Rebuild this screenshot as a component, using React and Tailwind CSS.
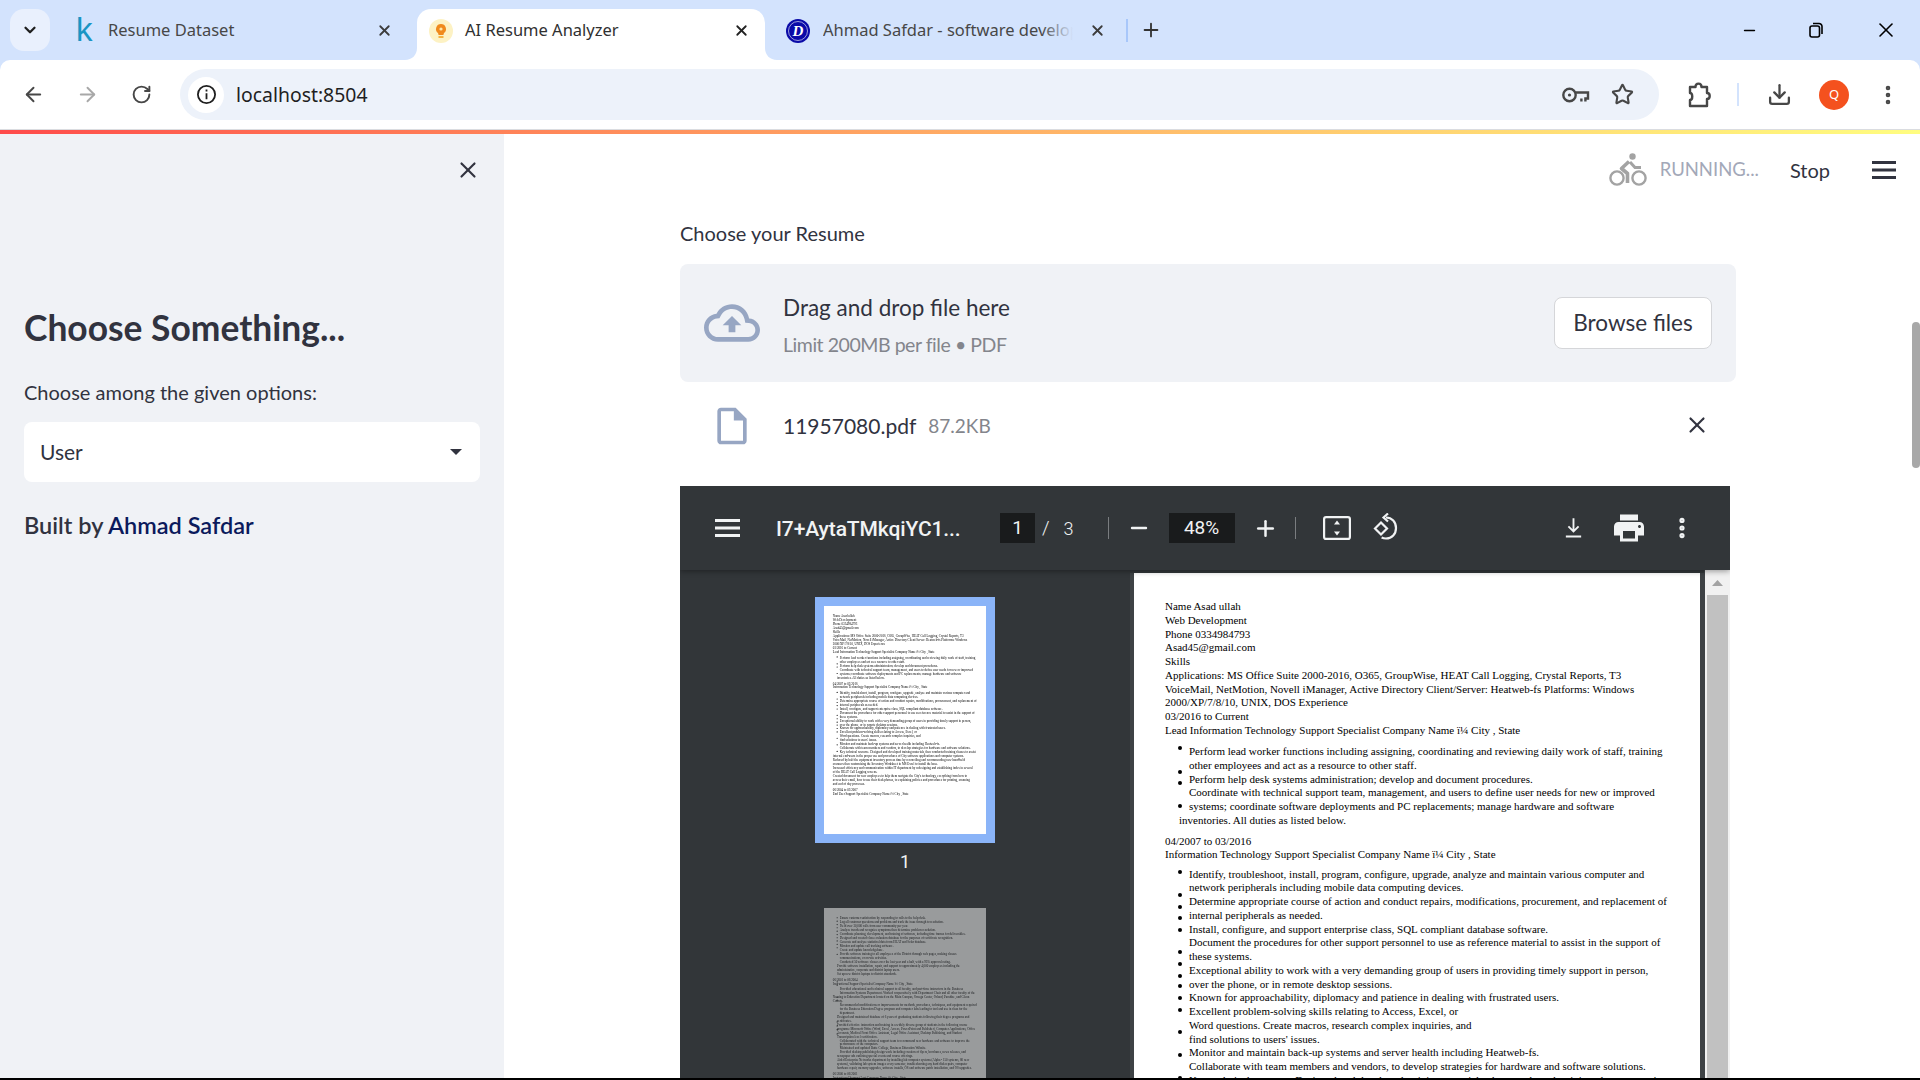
import React from "react";
import { ArrowLeft, ArrowRight, RotateCw, Star, Download, EllipsisVertical, X, Plus, Minus, ChevronDown } from "lucide-react";

const page1Blocks = [
  {
    gap: 0,
    lines: [
      "Name Asad ullah",
      "Web Development",
      "Phone 0334984793",
      "Asad45@gmail.com",
      "Skills",
      "Applications: MS Office Suite 2000-2016, O365, GroupWise, HEAT Call Logging, Crystal Reports, T3",
      "VoiceMail, NetMotion, Novell iManager, Active Directory Client/Server: Heatweb-fs Platforms: Windows",
      "2000/XP/7/8/10, UNIX, DOS Experience",
      "03/2016 to Current",
      "Lead Information Technology Support Specialist Company Name ï¼ City , State",
    ],
  },
  {
    gap: 7.5,
    indent: true,
    lines: [
      "Perform lead worker functions including assigning, coordinating and reviewing daily work of staff, training",
      "other employees and act as a resource to other staff.",
      "Perform help desk systems administration; develop and document procedures.",
      "Coordinate with technical support team, management, and users to define user needs for new or improved",
      "systems; coordinate software deployments and PC replacements; manage hardware and software",
    ],
  },
  { gap: 0, small: true, lines: ["inventories. All duties as listed below."] },
  { gap: 7, lines: ["04/2007 to 03/2016", "Information Technology Support Specialist Company Name ï¼ City , State"] },
  {
    gap: 5.5,
    indent: true,
    lines: [
      "Identify, troubleshoot, install, program, configure, upgrade, analyze and maintain various computer and",
      "network peripherals including mobile data computing devices.",
      "Determine appropriate course of action and conduct repairs, modifications, procurement, and replacement of",
      "internal peripherals as needed.",
      "Install, configure, and support enterprise class, SQL compliant database software.",
      "Document the procedures for other support personnel to use as reference material to assist in the support of",
      "these systems.",
      "Exceptional ability to work with a very demanding group of users in providing timely support in person,",
      "over the phone, or in remote desktop sessions.",
      "Known for approachability, diplomacy and patience in dealing with frustrated users.",
      "Excellent problem-solving skills relating to Access, Excel, or",
      "Word questions. Create macros, research complex inquiries, and",
      "find solutions to users' issues.",
      "Monitor and maintain back-up systems and server health including Heatweb-fs.",
      "Collaborate with team members and vendors, to develop strategies for hardware and software solutions.",
      "Key technical resource. Designed and developed training materials, then conducted training classes to assist",
    ],
  },
  {
    gap: 0,
    lines: [
      "internal end-users in the proper use and procedures of City software applications and computer systems.",
      "Reduced by half the equipment inventory process time by reconciling and recommending new hand-held",
      "scanners then customizing the Inventory Worksheet in MS Excel to install the base.",
      "Increased efficiency and communication within IT department by redesigning and establishing index in several",
      "of the HEAT Call Logging screens.",
      "Created document for new employees to help them navigate the City's technology, everything from how to",
      "access their email, how to use their desk phones, to explaining policies and procedures for printing, scanning",
      "and end of day processes.",
    ],
  },
  { gap: 8, lines: ["06/2004 to 03/2007", "End User Support Specialist Company Name ï¼ City , State"] },
];

const page1Bullets = [178, 202, 213, 236, 302, 325, 337, 348, 360, 382, 394, 406, 416, 428, 440, 462, 485, 508];

const page2Blocks = [
  {
    gap: 0,
    indent: true,
    lines: [
      "Ensure customer satisfaction by responding to calls to the help desk.",
      "Log all customer questions and problems and track the issue through to resolution.",
      "Field over 30,000 calls from user community per year.",
      "Analyze trends and recognize symptoms then determine problem resolution.",
      "Coordinate planning, development, and training of software, including time frames for deliverables.",
      "Designed and created class evaluation database for the purposes of certificate recognition.",
      "Generate and analyze statistical data from HEAT and Solar database.",
      "Monitor and update call tracking software.",
      "Create and update knowledgebase.",
      "Provide software training to all employees of the District through web pages, making classes",
      "communications, or on-site activities.",
      "Conducted 50 software classes over the last year and a half, with a 95% approval rating.",
    ],
  },
  {
    gap: 0,
    small: true,
    lines: [
      "Provide software installation, repair, and support to approximately 4,000 employees including the",
      "administrative, corporate and district laptop users.",
      "Set up new district laptops to district standards.",
    ],
  },
  { gap: 8, lines: ["06/2001 to 06/2004", "Instructional Support Specialist Company Name ï¼ City , State"] },
  {
    gap: 6,
    indent: true,
    lines: [
      "Provided educational and technical support to all faculty, and part-time instructors in the Business",
      "Information Systems Department. Worked cooperatively with Department Chair and all other faculty of the",
    ],
  },
  {
    gap: 0,
    lines: [
      "Nursing to Education Department located on the Main Campus, Omega Center, Orland, Paradise, and Glenn",
      "County.",
    ],
  },
  {
    gap: 0,
    indent: true,
    lines: [
      "Recommended modifications or improvements for methods, procedures, techniques, and equipment required",
      "for the Business Education Degree program and computer labs leading to tool and use in class for the",
      "department.",
    ],
  },
  {
    gap: 0,
    small: true,
    lines: [
      "Designed and maintained database of 6 years of graduating students following their degree programs and",
      "certificates.",
      "Provided effective instruction and training in a widely diverse group of students in the following course",
      "programs: Microsoft Office (Word, Excel, Access, PowerPoint and Publisher), Computer Applications, Office",
      "Accounts, Medical Front Office Assistant, Legal Office Assistant, Desktop Publishing, and Student",
      "Transcription level certification.",
    ],
  },
  {
    gap: 0,
    indent: true,
    lines: [
      "Collaborated with the technical support team to recommend new hardware and software to improve the",
      "performance of the computers.",
      "Maintained and updated Butte College, Business Education Website.",
      "Provided desktop publishing design work including creation of flyers, brochures, news releases, and",
    ],
  },
  {
    gap: 0,
    small: true,
    lines: [
      "newspaper ads outlining special events and course offerings.",
      "Aided Enterprise Networks department by installing lab computer systems (Alpha - 150 systems, 80 new",
      "systems), validating lab system images every semester, troubleshooting any hard disk repairs, computer",
      "hardware repair, memory upgrades, software installs, OS and software patch installation, and OS upgrades.",
    ],
  },
  { gap: 8, lines: ["06/2000 to 06/2001", "Instructional Support/Asst Company Name ï¼ City , State"] },
];

const page2Bullets = [34, 46, 58, 69, 81, 93, 104, 115, 127, 139, 162, 258, 270, 312, 322, 398, 412, 425, 440];

const PdfPage = ({ blocks, bullets }) => (
  <div className="relative w-[566px] h-[797px] bg-white text-black pt-[30px] font-['Liberation_Serif',serif] text-[11px] leading-[13.75px] whitespace-nowrap">
    {blocks.map((block, i) => (
      <div
        key={i}
        className={block.indent ? "pl-[55px]" : block.small ? "pl-[45px]" : "pl-[31px]"}
        style={{ marginTop: block.gap }}
      >
        {block.lines.map((line, j) => (
          <div key={j} className="h-[13.75px]">
            {line}
          </div>
        ))}
      </div>
    ))}
    {bullets.map((y) => (
      <span key={y} className="absolute left-[44px] w-[4px] h-[4px] rounded-full bg-black" style={{ top: y - 2 }} />
    ))}
  </div>
);

const Flare = ({ side }) =>
  side === "left" ? (
    <svg className="absolute left-[-12px] bottom-0 w-[12px] h-[12px]" viewBox="0 0 12 12">
      <path d="M12 0V12H0C7 12 12 7 12 0Z" fill="#fff" />
    </svg>
  ) : (
    <svg className="absolute right-[-12px] bottom-0 w-[12px] h-[12px]" viewBox="0 0 12 12">
      <path d="M0 0V12H12C5 12 0 7 0 0Z" fill="#fff" />
    </svg>
  );

const TabStrip = () => (
  <div className="h-[60px] shrink-0 bg-[#d3e3fd] flex font-['Noto_Sans',sans-serif] text-[16.5px] text-[#474747]">
    <div className="ml-[10px] mt-[9px] w-[40px] h-[42px] rounded-[14px] bg-[#e9f0fd] flex items-center justify-center">
      <ChevronDown size={18} strokeWidth={3} className="text-[#1f1f1f]" />
    </div>

    <div className="ml-[12px] w-[355px] h-[51px] mt-[9px] pb-[8px] flex items-center pl-[14px]">
      <span className="w-[32px] text-[#1a95c4] font-['Liberation_Sans',sans-serif] text-[33px] leading-none -mt-[2px]">k</span>
      <span>Resume Dataset</span>
      <X size={17} strokeWidth={2.5} className="ml-auto mr-[24px] text-[#3c3c3c]" />
    </div>

    <div className="relative w-[348px] h-[51px] mt-[9px] pb-[8px] bg-white rounded-t-[14px] flex items-center pl-[12px] text-[#303030]">
      <Flare side="left" />
      <svg className="w-[24px] h-[24px] mr-[12px]" viewBox="0 0 24 24">
        <circle cx="12" cy="12" r="12" fill="#fdf2c4" />
        <path d="M12 5a5 5 0 0 0-3 9l.6 2h4.8l.6-2a5 5 0 0 0-3-9z" fill="#f08a1c" />
        <rect x="9.5" y="17" width="5" height="2" fill="#f5b342" />
        <circle cx="12" cy="10" r="1.6" fill="#fde7a8" />
      </svg>
      <span>AI Resume Analyzer</span>
      <X size={17} strokeWidth={2.5} className="ml-auto mr-[15px] text-[#222]" />
      <Flare side="right" />
    </div>

    <div className="w-[353px] h-[51px] mt-[9px] pb-[8px] flex items-center pl-[21px]">
      <svg className="w-[24px] h-[24px] mr-[13px] shrink-0" viewBox="0 0 24 24">
        <circle cx="12" cy="12" r="12" fill="#0a0aa8" />
        <circle cx="12" cy="12" r="9.5" fill="none" stroke="#fff" strokeWidth="0.6" />
        <text x="12" y="17" textAnchor="middle" fill="#fff" fontSize="15" fontWeight="700" fontStyle="italic" fontFamily="Liberation Serif">D</text>
      </svg>
      <div className="relative w-[250px] overflow-hidden whitespace-nowrap">
        Ahmad Safdar - software developer
        <div className="absolute inset-y-0 right-0 w-[32px] bg-linear-to-r from-transparent to-[#d3e3fd]" />
      </div>
      <X size={17} strokeWidth={2.5} className="ml-[16px] text-[#3c3c3c]" />
    </div>

    <div className="w-[2px] h-[23px] mt-[19px] ml-[8px] bg-[#a8c7fa]" />
    <Plus size={22} strokeWidth={2} className="mt-[19px] ml-[12px] text-[#333]" />

    <div className="ml-auto flex items-center h-[60px] text-black">
      <Minus size={17} strokeWidth={2} className="mr-[50px]" />
      <svg className="w-[16px] h-[16px] mr-[50px]" viewBox="0 0 16 16" fill="none" stroke="currentColor" strokeWidth="1.6">
        <rect x="2" y="4" width="9.5" height="11" rx="2" />
        <path d="M5 1.5h6a3 3 0 0 1 3 3V12" />
      </svg>
      <X size={24} strokeWidth={1.6} className="mr-[22px]" />
    </div>
  </div>
);

const BrowserBar = () => (
  <div className="h-[69px] shrink-0 bg-white rounded-t-[10px] flex items-center text-[#474747]">
    <ArrowLeft size={23} strokeWidth={2} className="ml-[22px]" />
    <ArrowRight size={23} strokeWidth={2} className="ml-[31px] text-[#a8a8a8]" />
    <RotateCw size={21} strokeWidth={2.2} className="ml-[32px]" />
    <div className="ml-[28px] w-[1479px] h-[51px] rounded-full bg-[#edf2fa] flex items-center pl-[8px]">
      <div className="w-[36px] h-[36px] rounded-full bg-white flex items-center justify-center text-[#1f1f1f]">
        <svg className="w-[21px] h-[21px]" viewBox="0 0 21 21" fill="none" stroke="currentColor" strokeWidth="1.8">
          <circle cx="10.5" cy="10.5" r="8.6" />
          <path d="M10.5 9.2v6M10.5 5.6v1.8" />
        </svg>
      </div>
      <span className="ml-[12px] font-['Noto_Sans',sans-serif] text-[19.4px] text-[#1f1f1f]">localhost:8504</span>
      <svg className="ml-auto w-[29px] h-[18px]" viewBox="0 0 29 18" fill="none" stroke="#474747" strokeWidth="2.4">
        <circle cx="8.5" cy="9" r="6.2" />
        <circle cx="8.5" cy="9" r="1.6" fill="#474747" strokeWidth="0" />
        <path d="M14.5 6.5h12.5v6h-2.6v3M20.4 12.5v3" />
      </svg>
      <Star size={23} strokeWidth={2.2} className="ml-[21px] mr-[25px]" />
    </div>
    <svg className="ml-[27px] w-[26px] h-[26px]" viewBox="0 0 26 26" fill="none" stroke="#474747" strokeWidth="2.4">
      <path d="M4 5h5.5c0-4.5 6-4.5 6 0H21v6c3.6 0 3.6 6 0 6v7H4v-6c3 0 3-7 0-7z" strokeLinejoin="round" />
    </svg>
    <div className="ml-[25px] w-[2px] h-[23px] bg-[#d3e3fd]" />
    <Download size={25} strokeWidth={2.2} className="ml-[28px]" />
    <div className="ml-[27px] w-[30px] h-[30px] rounded-full bg-[#f4511e] flex items-center justify-center font-['Noto_Sans',sans-serif] text-[13px] text-white">Q</div>
    <EllipsisVertical size={24} strokeWidth={2.6} className="ml-[27px]" />
  </div>
);

const Sidebar = () => (
  <div className="w-[504px] shrink-0 bg-[#f0f2f6] pl-[24px] pr-[24px] text-[#31333f]">
    <div className="h-[72px] -mr-px flex items-center justify-end">
      <X size={26} strokeWidth={2} />
    </div>
    <h2 className="mt-[94px] h-[56px] leading-[56px] text-[35.4px] font-bold">Choose Something...</h2>
    <div className="mt-[22px] h-[28px] leading-[28px] text-[20px]">Choose among the given options:</div>
    <div className="mt-[16px] h-[60px] rounded-[8px] bg-white flex items-center pl-[16px] pr-[18px] text-[21px]">
      User
      <svg className="ml-auto w-[12px] h-[6px]" viewBox="0 0 12 6">
        <path d="M0 0h12L6 6z" fill="#31333f" />
      </svg>
    </div>
    <div className="mt-[29px] h-[28px] leading-[28px] text-[23.5px] font-semibold">
      Built by <span className="text-[#0b1a5c]">Ahmad Safdar</span>
    </div>
  </div>
);

const PdfToolbar = () => (
  <div className="relative z-10 h-[84px] shrink-0 bg-[#323639] flex items-center text-[#f1f3f4] font-['Roboto',sans-serif] shadow-[0_1px_6px_rgba(0,0,0,0.4)]">
    <svg className="ml-[35px] w-[25px] h-[18px]" viewBox="0 0 25 18" fill="currentColor">
      <rect width="25" height="3" />
      <rect y="7.5" width="25" height="3" />
      <rect y="15" width="25" height="3" />
    </svg>
    <span className="ml-[36px] mt-[3px] w-[224px] text-[21px] font-medium tracking-[-0.1px]">I7+AytaTMkqiYC1...</span>
    <div className="w-[35px] h-[30px] bg-[#191b1c] flex items-center justify-center text-[19px]">1</div>
    <span className="ml-[7px] text-[19px] font-light">/</span>
    <span className="ml-[14px] text-[18px] font-light">3</span>
    <div className="ml-[34px] w-px h-[22px] bg-[#7a7d80]" />
    <Minus size={24} strokeWidth={2.4} className="ml-[18px]" />
    <div className="ml-[18px] w-[66px] h-[30px] bg-[#191b1c] flex items-center justify-center text-[19px]">48%</div>
    <Plus size={25} strokeWidth={2.4} className="ml-[18px]" />
    <div className="ml-[17px] w-px h-[22px] bg-[#7a7d80]" />
    <svg className="ml-[27px] w-[28px] h-[24px]" viewBox="0 0 28 24" fill="none" stroke="currentColor" strokeWidth="2.2">
      <rect x="1.1" y="1.1" width="25.8" height="21.8" rx="2" />
      <path d="M14 4.5l3 4h-6zM14 19.5l-3-4h6z" fill="currentColor" strokeWidth="0" />
    </svg>
    <svg className="ml-[20px] w-[28px] h-[30px]" viewBox="0 0 28 30" fill="none" stroke="currentColor" strokeWidth="2.2">
      <path d="M10 15.5l6-6 6 6-6 6z" transform="translate(-6 0)" />
      <path d="M15 4.5c6 0 10 4.5 10 10.5S21 25.5 15 25.5c-1.6 0-3-.3-4.4-1" />
      <path d="M17 0.5l-4.5 4 4.5 4" />
    </svg>
    <svg className="ml-[166px] w-[17px] h-[20px]" viewBox="0 0 20 23" fill="none" stroke="currentColor" strokeWidth="2.2">
      <path d="M10 0v15M4 9.5l6 6 6-6M1 21.5h18" />
    </svg>
    <svg className="ml-[32px] w-[30px] h-[30px]" viewBox="2 2 20 20" fill="currentColor">
      <path d="M19 8H5c-1.66 0-3 1.34-3 3v6h4v4h12v-4h4v-6c0-1.66-1.34-3-3-3zm-3 11H8v-5h8v5zm3-7c-.55 0-1-.45-1-1s.45-1 1-1 1 .45 1 1-.45 1-1 1zm-1-9H6v4h12V3z" />
    </svg>
    <EllipsisVertical size={26} strokeWidth={2.8} className="ml-[25px]" />
  </div>
);

const Thumb = ({ active, blocks, bullets }) => (
  <div className={active ? "w-[180px] p-[9px] bg-[#8ab4f8]" : "w-[180px] p-[9px]"}>
    <div className={active ? "w-[162px] h-[228px] overflow-hidden" : "w-[162px] h-[228px] overflow-hidden opacity-50"}>
      <div className="origin-top-left scale-[0.2862] blur-[0.5px]">
        <PdfPage blocks={blocks} bullets={bullets} />
      </div>
    </div>
  </div>
);

const PdfViewer = () => (
  <div className="mt-[34px] w-[1050px] flex-1 min-h-0 flex flex-col overflow-hidden">
    <PdfToolbar />
    <div className="flex-1 min-h-0 flex overflow-hidden">
      <div className="w-[450px] shrink-0 bg-[#323639] flex flex-col items-center pt-[27px]">
        <Thumb active blocks={page1Blocks} bullets={page1Bullets} />
        <div className="mt-[8px] h-[22px] leading-[22px] text-[18px] text-[#f1f3f4] font-['Roboto',sans-serif]">1</div>
        <div className="mt-[26px]">
          <Thumb blocks={page2Blocks} bullets={page2Bullets} />
        </div>
      </div>
      <div className="flex-1 bg-[#3e4245] pl-[4px] pr-[5px]">
        <div className="relative z-[1] h-[3px] -mx-[4px] bg-[#323639]" />
        <div className="-mt-[3px]">
          <PdfPage blocks={page1Blocks} bullets={page1Bullets} />
        </div>
      </div>
      <div className="w-[25px] shrink-0 bg-[#f1f1f1] px-[2px]">
        <div className="h-[25px] flex items-center justify-center">
          <svg className="w-[11px] h-[6px]" viewBox="0 0 11 6">
            <path d="M5.5 0L11 6H0z" fill="#a3a3a3" />
          </svg>
        </div>
        <div className="h-[600px] bg-[#c1c1c1]" />
      </div>
    </div>
  </div>
);

const Main = () => (
  <div className="relative flex-1 min-w-0 bg-white pl-[176px] pr-[184px] flex flex-col text-[#31333f]">
    <div className="absolute top-[188px] right-0 w-[8px] h-[146px] rounded-full bg-[#a8a8a8]" />

    <div className="h-[72px] shrink-0 -mr-[160px] flex items-center justify-end">
      <svg className="w-[38px] h-[34px] text-[#a3a3a3]" viewBox="0 0 38 34" fill="none" stroke="currentColor">
        <circle cx="8" cy="25" r="6.6" strokeWidth="2.4" />
        <circle cx="30" cy="25" r="6.6" strokeWidth="2.4" />
        <circle cx="23.5" cy="3.5" r="3.2" fill="currentColor" strokeWidth="0" />
        <path d="M20 8.5l-7.5 7 6 5V30" strokeWidth="3.6" strokeLinejoin="round" />
        <path d="M21 9l5 5.5h6" strokeWidth="3" />
      </svg>
      <span className="ml-[13px] text-[18.5px] text-[#a3a8b8]">RUNNING...</span>
      <span className="ml-[31px] text-[20px]">Stop</span>
      <svg className="ml-[42px] w-[24px] h-[18px]" viewBox="0 0 24 18" fill="#31333f">
        <rect width="24" height="3" />
        <rect y="7.5" width="24" height="3" />
        <rect y="15" width="24" height="3" />
      </svg>
    </div>

    <div className="h-[58px] shrink-0 pb-[4px] flex items-center text-[20px]">Choose your Resume</div>

    <div className="h-[118px] shrink-0 rounded-[8px] bg-[#f0f2f6] flex items-center pl-[24px] pr-[24px]">
      <svg className="w-[56px] h-[56px] shrink-0 text-[#97a6c3]" viewBox="0 0 24 24" fill="currentColor">
        <path d="M19.35 10.04C18.67 6.59 15.64 4 12 4 9.11 4 6.6 5.64 5.35 8.04 2.34 8.36 0 10.91 0 14c0 3.31 2.69 6 6 6h13c2.76 0 5-2.24 5-5 0-2.64-2.05-4.78-4.65-4.96zM19 18H6c-2.21 0-4-1.79-4-4 0-2.05 1.53-3.76 3.56-3.97l1.07-.11.5-.95C8.08 7.14 9.94 6 12 6c2.62 0 4.88 1.86 5.39 4.43l.3 1.5 1.53.11c1.56.1 2.78 1.41 2.78 2.96 0 1.65-1.35 3-3 3zM8 13h2.55v3h2.9v-3H16l-4-4z" />
      </svg>
      <div className="ml-[23px] pt-[6px]">
        <div className="text-[22.5px] leading-[28px]">Drag and drop file here</div>
        <div className="mt-[10px] text-[19.5px] tracking-[-0.45px] leading-[26px] text-[#83858c]">Limit 200MB per file • PDF</div>
      </div>
      <div className="ml-auto w-[158px] h-[52px] rounded-[8px] border border-[#d5d6d9] bg-white flex items-center justify-center text-[22.5px]">Browse files</div>
    </div>

    <div className="mt-[18px] h-[52px] shrink-0 flex items-center pl-[30px] pr-[26px]">
      <svg className="w-[44px] h-[44px] shrink-0 text-[#97a6c3]" viewBox="0 0 24 24" fill="currentColor">
        <path d="M14 2H6c-1.1 0-1.99.9-1.99 2L4 20c0 1.1.89 2 1.99 2H18c1.1 0 2-.9 2-2V8l-6-6zM6 20V4h7v5h5v11H6z" />
      </svg>
      <span className="ml-[29px] text-[21px]">11957080.pdf</span>
      <span className="ml-[12px] text-[19px] text-[#83858c]">87.2KB</span>
      <X size={26} strokeWidth={2} className="ml-auto -mt-[2px]" />
    </div>

    <PdfViewer />
  </div>
);

export default function App() {
  return (
    <div className="w-[1920px] h-[1080px] overflow-hidden flex flex-col bg-[#d3e3fd] font-['Lato',sans-serif]">
      <TabStrip />
      <BrowserBar />
      <div className="h-px shrink-0 bg-[#dadce0]" />
      <div className="h-[4px] shrink-0 bg-linear-to-r from-[#ff4b4b] to-[#fffd80]" />
      <div className="flex-1 min-h-0 flex">
        <Sidebar />
        <Main />
      </div>
      <div className="h-[2px] shrink-0 bg-black" />
    </div>
  );
}
